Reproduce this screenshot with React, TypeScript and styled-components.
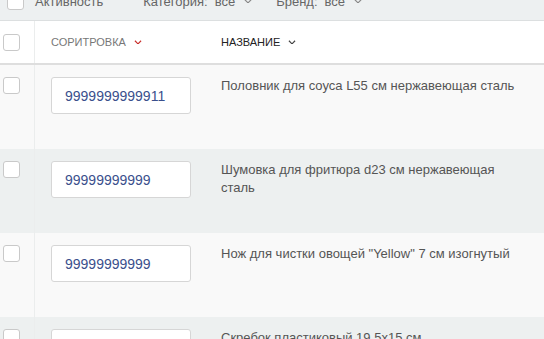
import React from "react";
import styled, { createGlobalStyle } from "styled-components";

const GlobalStyle = createGlobalStyle`
  html, body {
    margin: 0;
    padding: 0;
    overflow: hidden;
    background: #ffffff;
    font-family: "Liberation Sans", Arial, sans-serif;
  }
`;

const Page = styled.div`
  width: 544px;
  height: 339px;
  overflow: hidden;
`;

const Toolbar = styled.div`
  display: flex;
  align-items: center;
  height: 38px;
  margin-top: -18px;
  padding-left: 7px;
  background: #edf0f1;
  border-bottom: 1px solid #dcdfe0;
  font-size: 13px;
  color: #666;
`;

const Box = styled.span`
  display: inline-block;
  box-sizing: border-box;
  width: 17px;
  height: 17px;
  background: #fff;
  border: 1px solid #c9c9c9;
  border-radius: 3px;
`;

const ToolLabel = styled.span<{ $ml: number }>`
  margin-left: ${(p) => p.$ml}px;
  white-space: nowrap;
`;

const Filter = styled.div<{ $ml: number }>`
  display: flex;
  align-items: center;
  margin-left: ${(p) => p.$ml}px;
  white-space: nowrap;
`;

const FilterValue = styled.span`
  margin-left: 7px;
  margin-right: 9px;
`;

const Grid = styled.div`
  display: grid;
  grid-template-columns: 35px 170px 1fr;
`;

const HeaderRow = styled(Grid)`
  height: 42px;
  background: #fff;
  border-bottom: 2px solid #dedede;
`;

const Row = styled(Grid)<{ $alt: boolean }>`
  height: 84px;
  background: ${(p) => (p.$alt ? "#edf0f0" : "#f9f9f9")};
`;

const CheckCell = styled.div<{ $center?: boolean }>`
  display: flex;
  align-items: ${(p) => (p.$center ? "center" : "flex-start")};
  padding: ${(p) => (p.$center ? "0 0 0 3px" : "12px 0 0 3px")};
  border-right: 1px solid #ebeded;
`;

const HeadCell = styled.div<{ $dark?: boolean }>`
  display: flex;
  align-items: center;
  padding-left: 16px;
  font-size: 11px;
  text-transform: uppercase;
  color: ${(p) => (p.$dark ? "#222" : "#777")};
  gap: 8px;
`;

const SortCell = styled.div`
  padding: 12px 16px;
`;

const SortInput = styled.input`
  box-sizing: border-box;
  width: 140px;
  height: 37px;
  padding: 0 13px;
  border: 1px solid #d6d6d6;
  border-radius: 3px;
  background: #fff;
  font-family: "Liberation Sans", Arial, sans-serif;
  font-size: 14px;
  color: #3a4f8c;
  outline: none;
`;

const NameCell = styled.div`
  padding: 12px 20px 0 16px;
  font-size: 13px;
  line-height: 18px;
  color: #555;
`;

const Chevron = ({ color, size = 8 }: { color: string; size?: number }) => (
  <svg width={size} height={size * 0.6} viewBox="0 0 8 5" fill="none">
    <polyline points="0.8,0.8 4,4 7.2,0.8" stroke={color} strokeWidth="1.2" />
  </svg>
);

const items = [
  { sku: "9999999999911", name: "Половник для соуса L55 см нержавеющая сталь" },
  { sku: "99999999999", name: "Шумовка для фритюра d23 см нержавеющая сталь" },
  { sku: "99999999999", name: 'Нож для чистки овощей "Yellow" 7 см изогнутый' },
  { sku: "99999999999", name: "Скребок пластиковый 19,5х15 см" },
];

export default function App() {
  return (
    <Page>
      <GlobalStyle />
      <Toolbar>
        <Box />
        <ToolLabel $ml={11}>Активность</ToolLabel>
        <Filter $ml={40}>
          <span>Категория:</span>
          <FilterValue>все</FilterValue>
          <Chevron color="#888" />
        </Filter>
        <Filter $ml={24}>
          <span>Бренд:</span>
          <FilterValue>все</FilterValue>
          <Chevron color="#888" />
        </Filter>
      </Toolbar>
      <HeaderRow>
        <CheckCell $center>
          <Box />
        </CheckCell>
        <HeadCell>
          Соритровка
          <Chevron color="#c9302c" />
        </HeadCell>
        <HeadCell $dark>
          Название
          <Chevron color="#444" />
        </HeadCell>
      </HeaderRow>
      {items.map((it, i) => (
        <Row key={i} $alt={i % 2 === 1}>
          <CheckCell>
            <Box />
          </CheckCell>
          <SortCell>
            <SortInput readOnly value={it.sku} />
          </SortCell>
          <NameCell>{it.name}</NameCell>
        </Row>
      ))}
    </Page>
  );
}
